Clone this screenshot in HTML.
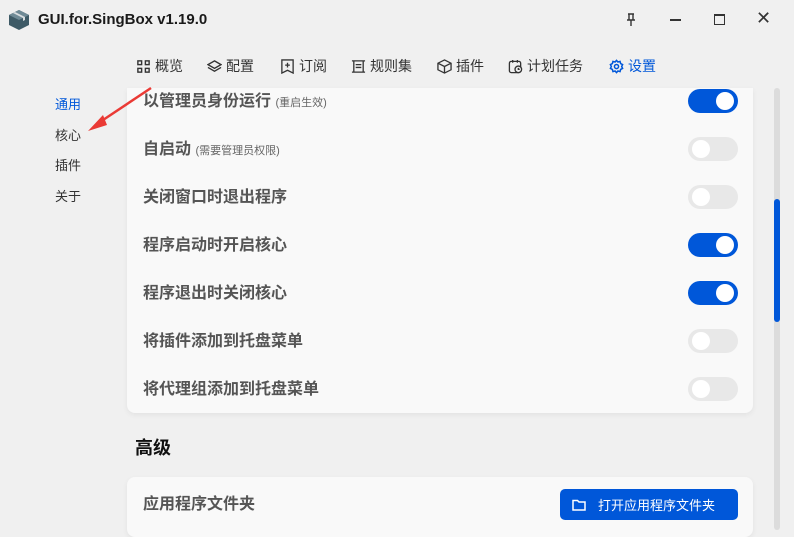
<!DOCTYPE html>
<html><head><meta charset="utf-8"><style>
*{margin:0;padding:0;box-sizing:border-box}
body{width:794px;height:536px;overflow:hidden;background:#f0f0f0;font-family:"Liberation Sans","Noto Sans CJK SC",sans-serif;position:relative;color:#333}
.abs{position:absolute}
.title{left:38px;top:11px;font-size:15px;font-weight:bold;color:#1a1a1a}
.nav{top:56px;font-size:14px;color:#333;display:flex;align-items:center;gap:4px}
.nav svg{width:15px;height:15px}
.side{left:55px;font-size:13px;color:#333}
.card{left:127px;width:626px;background:#f9f9f9;border-radius:8px;box-shadow:0 2px 6px rgba(0,0,0,.06)}
.row{left:143px;font-size:16px;font-weight:bold;color:#555;line-height:22px}
.row small{font-size:11px;font-weight:normal;color:#666}
.tg{left:688px;width:50px;height:24px;border-radius:12px;background:#e8e8e8}
.tg::after{content:"";position:absolute;top:3px;left:4px;width:18px;height:18px;border-radius:50%;background:#fff}
.tg.on{background:#0057d9}
.tg.on::after{left:28px}
</style></head><body>
<svg class="abs" style="left:7px;top:8px" width="24" height="24" viewBox="0 0 24 24"><path d="M12 2L22 7V17L12 22L2 17V7Z" fill="#3e5a66"/><path d="M2 7L12 2L22 7L12 12Z" fill="#6f8a96"/><path d="M6 5L16 10V13L18 12V9L8 4Z" fill="#d8dde0"/></svg>
<div class="abs title">GUI.for.SingBox v1.19.0</div>
<svg class="abs" style="left:625px;top:13px" width="12" height="14" viewBox="0 0 12 14"><path d="M3 1H9M4 1V7H8V1M2 7H10M6 7V13" stroke="#333" stroke-width="1.4" fill="none"/></svg>
<div class="abs" style="left:670px;top:19px;width:11px;height:2px;background:#333"></div>
<div class="abs" style="left:714px;top:14px;width:11px;height:11px;border:1.5px solid #333;border-top-width:2.5px"></div>
<div class="abs" style="left:756px;top:8px;font-size:18px;color:#333">✕</div>

<div class="abs nav" style="left:136px"><svg viewBox="0 0 16 16"><g fill="none" stroke="#333" stroke-width="1.5"><rect x="2" y="2" width="4" height="4"/><rect x="10" y="2" width="4" height="4"/><rect x="2" y="10" width="4" height="4"/><rect x="10" y="10" width="4" height="4"/></g></svg>概览</div>
<div class="abs nav" style="left:207px"><svg viewBox="0 0 16 16"><g fill="none" stroke="#333" stroke-width="1.4"><path d="M8 2L15 6L8 10L1 6Z"/><path d="M1 9L8 13L15 9"/></g></svg>配置</div>
<div class="abs nav" style="left:280px"><svg viewBox="0 0 16 16"><g fill="none" stroke="#333" stroke-width="1.4"><path d="M2 1H14V15L8 12L2 15Z"/><path d="M8 4V9M5.5 6.5H10.5"/></g></svg>订阅</div>
<div class="abs nav" style="left:351px"><svg viewBox="0 0 16 16"><g fill="none" stroke="#333" stroke-width="1.4"><path d="M1 2H15M1 14H15M3 2V14M13 2V14M5 6H11M5 9H11"/></g></svg>规则集</div>
<div class="abs nav" style="left:437px"><svg viewBox="0 0 16 16"><g fill="none" stroke="#333" stroke-width="1.4"><path d="M8 1L15 4.5V11.5L8 15L1 11.5V4.5Z"/><path d="M1 4.5L8 8L15 4.5M8 8V15"/></g></svg>插件</div>
<div class="abs nav" style="left:508px"><svg viewBox="0 0 16 16"><g fill="none" stroke="#333" stroke-width="1.4"><rect x="1.5" y="2.5" width="12" height="12" rx="2"/><path d="M5 1V4M10 1V4"/><circle cx="11" cy="11" r="3.5" fill="#f0f0f0"/><path d="M11 9.5V11H12.5"/></g></svg>计划任务</div>
<div class="abs nav" style="left:609px;color:#0057d9"><svg viewBox="0 0 16 16"><g fill="none" stroke="#0057d9" stroke-width="1.6"><circle cx="8" cy="8" r="2.2"/><path d="M8 1.5L9.5 3.2L11.8 2.6L12.4 4.9L14.5 6L13.5 8L14.5 10L12.4 11.1L11.8 13.4L9.5 12.8L8 14.5L6.5 12.8L4.2 13.4L3.6 11.1L1.5 10L2.5 8L1.5 6L3.6 4.9L4.2 2.6L6.5 3.2Z"/></g></svg>设置</div>

<div class="abs side" style="top:94px;color:#0057d9">通用</div>
<div class="abs side" style="top:125px">核心</div>
<div class="abs side" style="top:155px">插件</div>
<div class="abs side" style="top:186px">关于</div>

<div class="abs card" style="top:88px;height:325px;border-radius:0 0 8px 8px"></div>
<div class="abs row" style="top:91px">以管理员身份运行 <small>(重启生效)</small></div>
<div class="abs row" style="top:139px">自启动 <small>(需要管理员权限)</small></div>
<div class="abs row" style="top:187px">关闭窗口时退出程序</div>
<div class="abs row" style="top:235px">程序启动时开启核心</div>
<div class="abs row" style="top:283px">程序退出时关闭核心</div>
<div class="abs row" style="top:331px">将插件添加到托盘菜单</div>
<div class="abs row" style="top:379px">将代理组添加到托盘菜单</div>
<div class="abs tg on" style="top:89px"></div>
<div class="abs tg" style="top:137px"></div>
<div class="abs tg" style="top:185px"></div>
<div class="abs tg on" style="top:233px"></div>
<div class="abs tg on" style="top:281px"></div>
<div class="abs tg" style="top:329px"></div>
<div class="abs tg" style="top:377px"></div>

<div class="abs" style="left:135px;top:434px;font-size:18px;font-weight:bold;color:#111">高级</div>
<div class="abs card" style="top:477px;height:60px"></div>
<div class="abs row" style="top:494px">应用程序文件夹</div>
<div class="abs" style="left:560px;top:489px;width:178px;height:31px;background:#0057d9;border-radius:5px;color:#fff;font-size:13px;display:flex;align-items:center;padding-left:12px;gap:12px">
<svg width="14" height="12" viewBox="0 0 14 12"><path d="M1 1.5H5.5L7 3H13V11H1Z" fill="none" stroke="#fff" stroke-width="1.5"/></svg>打开应用程序文件夹</div>

<div class="abs" style="left:774px;top:88px;width:6px;height:442px;background:#dcdcdc;border-radius:3px"></div>
<div class="abs" style="left:774px;top:199px;width:6px;height:123px;background:#0057d9;border-radius:3px"></div>

<svg class="abs" style="left:85px;top:85px" width="70" height="50" viewBox="0 0 70 50"><line x1="66" y1="3" x2="12" y2="39" stroke="#ea3a35" stroke-width="2.5"/><path d="M3 46L18 30L22 40Z" fill="#ea3a35"/></svg>
</body></html>
